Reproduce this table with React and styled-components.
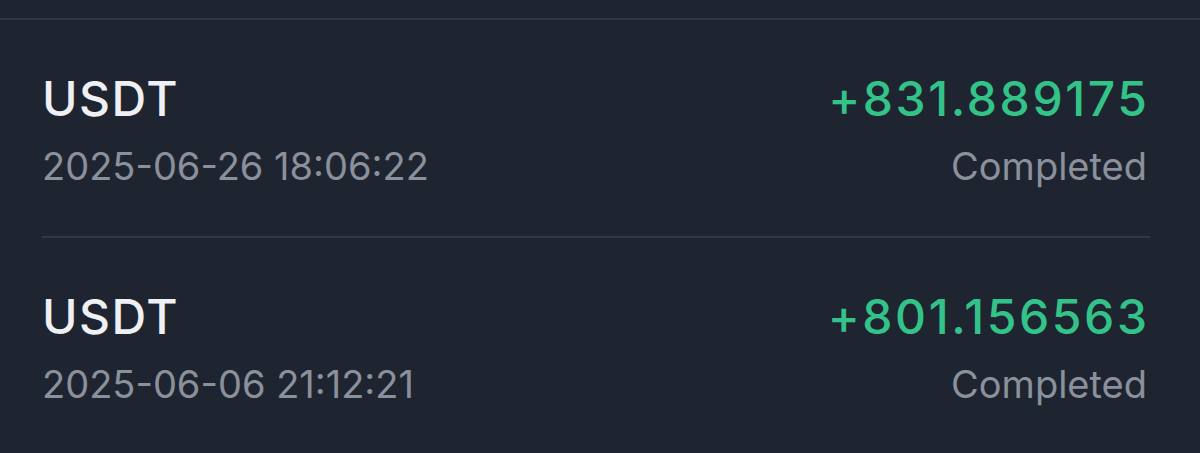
import React from "react";
import styled, { createGlobalStyle } from "styled-components";

// transaction rows

const records = [
  { coin: "USDT", time: "2025-06-26 18:06:22", amount: "+831.889175", status: "Completed" },
  { coin: "USDT", time: "2025-06-06 21:12:21", amount: "+801.156563", status: "Completed" },
];

const Global = createGlobalStyle`
  html, body {
    margin: 0;
    background: #1f2530;
  }
  body {
    font-family: Inter, "Noto Sans", sans-serif;
  }
`;

export default function App() {
  return (
    <>
      <Global />
      <Page>
        <TopRule />
        <List>
          {records.map((rec, index) => (
            <Row key={index} last={index === records.length - 1}>
              <Side>
                <Coin>{rec.coin}</Coin>
                <Sub>{rec.time}</Sub>
              </Side>
              <Side align="flex-end">
                <Amount>{rec.amount}</Amount>
                <Sub>{rec.status}</Sub>
              </Side>
            </Row>
          ))}
        </List>
      </Page>
    </>
  );
}

const Page = styled.div`
  width: 1200px;
  height: 453px;
  overflow: hidden;
  background: #1f2530;
  padding-top: 18px;
  box-sizing: border-box;
`;

const TopRule = styled.div`
  height: 2px;
  background: #313844;
`;

const List = styled.div`
  margin: 0 50px 0 42px;
`;

const Row = styled.div`
  display: flex;
  justify-content: space-between;
  align-items: flex-start;
  height: 218px;
  box-sizing: border-box;
  padding: 49px 3px 0 0;
  border-bottom: ${(p) => (p.last ? "none" : "2px solid #323945")};
`;

const Side = styled.div`
  display: flex;
  flex-direction: column;
  align-items: ${(p) => p.align || "flex-start"};
  gap: 14px;
`;

const Coin = styled.div`
  font-size: 48px;
  font-weight: 500;
  line-height: 60px;
  letter-spacing: 1.5px;
  color: #eef0f4;
`;

const Amount = styled.div`
  font-size: 48px;
  font-weight: 500;
  line-height: 60px;
  letter-spacing: 2.6px;
  margin-right: -2.6px;
  color: #33c389;
`;

const Sub = styled.div`
  font-size: 38px;
  font-weight: 400;
  line-height: 46px;
  color: #8b919c;
`;
